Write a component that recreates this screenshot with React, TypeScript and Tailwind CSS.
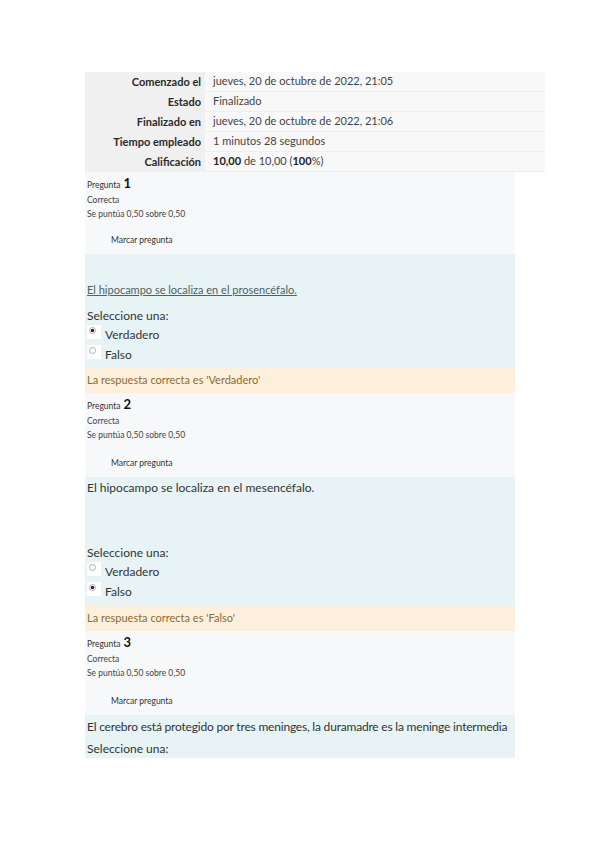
import React from "react";

const summary = [
  { label: "Comenzado el", value: <>jueves, 20 de octubre de 2022, 21:05</> },
  { label: "Estado", value: <>Finalizado</> },
  { label: "Finalizado en", value: <>jueves, 20 de octubre de 2022, 21:06</> },
  { label: "Tiempo empleado", value: <>1 minutos 28 segundos</> },
  {
    label: "Calificación",
    value: (
      <>
        <b className="font-bold text-[#222]">10,00</b> de 10,00 (<b className="font-bold text-[#222]">100</b>%)
      </>
    ),
  },
];

function Radio({ checked }: { checked: boolean }) {
  return (
    <span className="flex h-[14px] w-[14px] items-start justify-start self-start bg-white pl-[2px] pt-[2px]">
      <svg width="7" height="7" viewBox="0 0 7 7">
        <circle cx="3.5" cy="3.5" r="3" fill="#fff" stroke="#9a9a9a" strokeWidth="0.8" />
        {checked && <circle cx="3.5" cy="3.5" r="1.7" fill="#222" />}
      </svg>
    </span>
  );
}

function Info({ n, h, gap }: { n: number; h: string; gap: string }) {
  return (
    <div className={`flex flex-col bg-[#f7f8fa] px-[2px] pt-[2px] ${h}`}>
      <div className="flex items-baseline gap-[3px] text-[#333]">
        <span className="text-[8.5px]">Pregunta</span>
        <span className="text-[13px] font-bold text-[#111]">{n}</span>
      </div>
      <div className="text-[8.5px] leading-[13px] text-[#444]">Correcta</div>
      <div className="text-[8.5px] leading-[14px] text-[#444]">Se puntúa 0,50 sobre 0,50</div>
      <div className={`ml-[24px] text-[8.5px] text-[#333] ${gap}`}>Marcar pregunta</div>
    </div>
  );
}

function Options({ correct }: { correct: "V" | "F" }) {
  return (
    <div className="flex flex-col">
      <div className="flex h-[20px] items-center gap-[4px]">
        <Radio checked={correct === "V"} />
        <span className="text-[12px] text-[#333]">Verdadero</span>
      </div>
      <div className="flex h-[20px] items-center gap-[4px]">
        <Radio checked={correct === "F"} />
        <span className="text-[12px] text-[#333]">Falso</span>
      </div>
    </div>
  );
}

function Feedback({ text }: { text: string }) {
  return (
    <div className="flex h-[26px] items-center bg-[#fcefdc] px-[2px] text-[11px] text-[#8e6a34]">
      {text}
    </div>
  );
}

export default function App() {
  return (
    <div
      className="min-h-[848px] w-[599px] bg-white pt-[72px]"
      style={{ fontFamily: '"Lato", "Open Sans", sans-serif' }}
    >
      <div className="ml-[85px] w-[460px]">
        {summary.map((r) => (
          <div key={r.label} className="flex h-[20px] text-[11px]">
            <div className="flex w-[120px] items-center justify-end bg-[#f0f0f0] pr-[4px] font-bold text-[#2a2a2a]">
              {r.label}
            </div>
            <div className="flex flex-1 items-center border-b border-[#eeeeee] bg-[#f8f8f8] pl-[8px] text-[#444]">
              <span>{r.value}</span>
            </div>
          </div>
        ))}
      </div>

      <div className="ml-[85px] w-[430px]">
        <Info n={1} h="h-[82px]" gap="mt-[13px]" />
        <div className="flex h-[113px] flex-col bg-[#e7f3f5] px-[2px]">
          <div className="mt-[28px] text-[11px] text-[#4f6160] underline">
            El hipocampo se localiza en el prosencéfalo.
          </div>
          <div className="mt-[8px] text-[12px] text-[#333]">Seleccione una:</div>
          <Options correct="V" />
        </div>
        <Feedback text="La respuesta correcta es 'Verdadero'" />

        <Info n={2} h="h-[84px]" gap="mt-[15px]" />
        <div className="flex h-[128px] flex-col bg-[#e7f3f5] px-[2px]">
          <div className="mt-[2px] text-[12px] text-[#333]">El hipocampo se localiza en el mesencéfalo.</div>
          <div className="mt-[47px] text-[12px] text-[#333]">Seleccione una:</div>
          <Options correct="F" />
        </div>
        <Feedback text="La respuesta correcta es 'Falso'" />

        <Info n={3} h="h-[84px]" gap="mt-[15px]" />
        <div className="flex h-[43px] flex-col bg-[#e7f3f5] px-[2px]">
          <div className="mt-[3px] whitespace-nowrap text-[12px] tracking-[-0.2px] text-[#333]">
            El cerebro está protegido por tres meninges, la duramadre es la meninge intermedia
          </div>
          <div className="mt-[4px] text-[12px] text-[#333]">Seleccione una:</div>
        </div>
      </div>
    </div>
  );
}
